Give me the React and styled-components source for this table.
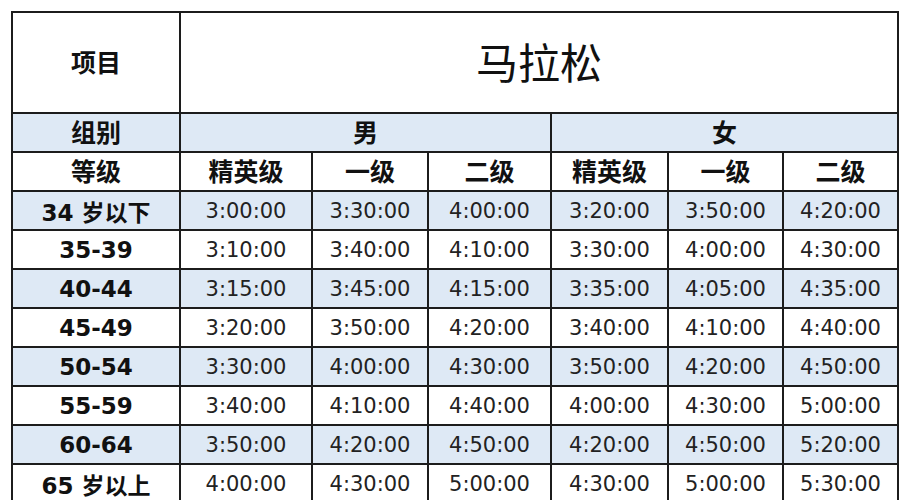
import React from "react";
import styled, { createGlobalStyle } from "styled-components";

const Global = createGlobalStyle`
  html, body { margin: 0; padding: 0; background: #ffffff; }
  body { width: 911px; height: 500px; overflow: hidden; }
`;

const Page = styled.div`
  padding: 11px 0 0 11px;
`;

const Table = styled.div`
  display: grid;
  width: max-content;
  grid-template-columns: 166px 130px 114px 121px 115px 113px 113px;
  grid-template-rows: 99px 37px 37px repeat(8, 37px);
  gap: 2px;
  padding: 2px;
  background: #1c1c1c;
`;

const Cell = styled.div`
  grid-column: span ${(p) => p.$span || 1};
  display: flex;
  align-items: center;
  justify-content: center;
  background: ${(p) => (p.$blue ? "#dee9f5" : "#ffffff")};
  color: #111;
  white-space: nowrap;
`;

const Title = styled(Cell)`
  font-family: "Noto Sans CJK SC", sans-serif;
  font-weight: 400;
  font-size: 42px;
  padding-bottom: 5px;
`;

const Head = styled(Cell)`
  font-family: "Noto Sans CJK SC", sans-serif;
  font-weight: 700;
  font-size: 25px;
  padding-bottom: 3px;
`;

const Age = styled(Cell)`
  font-family: "DejaVu Sans", "Noto Sans CJK SC", sans-serif;
  font-weight: 700;
  font-size: 23px;
`;

const Time = styled(Cell)`
  font-family: "DejaVu Sans", sans-serif;
  font-weight: 400;
  font-size: 21px;
  color: #222;
`;

const grades = ["精英级", "一级", "二级", "精英级", "一级", "二级"];

const rows = [
  ["34 岁以下", "3:00:00", "3:30:00", "4:00:00", "3:20:00", "3:50:00", "4:20:00"],
  ["35-39", "3:10:00", "3:40:00", "4:10:00", "3:30:00", "4:00:00", "4:30:00"],
  ["40-44", "3:15:00", "3:45:00", "4:15:00", "3:35:00", "4:05:00", "4:35:00"],
  ["45-49", "3:20:00", "3:50:00", "4:20:00", "3:40:00", "4:10:00", "4:40:00"],
  ["50-54", "3:30:00", "4:00:00", "4:30:00", "3:50:00", "4:20:00", "4:50:00"],
  ["55-59", "3:40:00", "4:10:00", "4:40:00", "4:00:00", "4:30:00", "5:00:00"],
  ["60-64", "3:50:00", "4:20:00", "4:50:00", "4:20:00", "4:50:00", "5:20:00"],
  ["65 岁以上", "4:00:00", "4:30:00", "5:00:00", "4:30:00", "5:00:00", "5:30:00"],
];

export default function App() {
  return (
    <>
      <Global />
      <Page>
        <Table>
          <Head>项目</Head>
          <Title $span={6}>马拉松</Title>

          <Head $blue>组别</Head>
          <Head $blue $span={3}>男</Head>
          <Head $blue $span={3}>女</Head>

          <Head>等级</Head>
          {grades.map((g, i) => (
            <Head key={i}>{g}</Head>
          ))}

          {rows.map((r, ri) => {
            const blue = ri % 2 === 0;
            return (
              <React.Fragment key={ri}>
                <Age $blue={blue}>{r[0]}</Age>
                {r.slice(1).map((t, ti) => (
                  <Time key={ti} $blue={blue}>
                    {t}
                  </Time>
                ))}
              </React.Fragment>
            );
          })}
        </Table>
      </Page>
    </>
  );
}
